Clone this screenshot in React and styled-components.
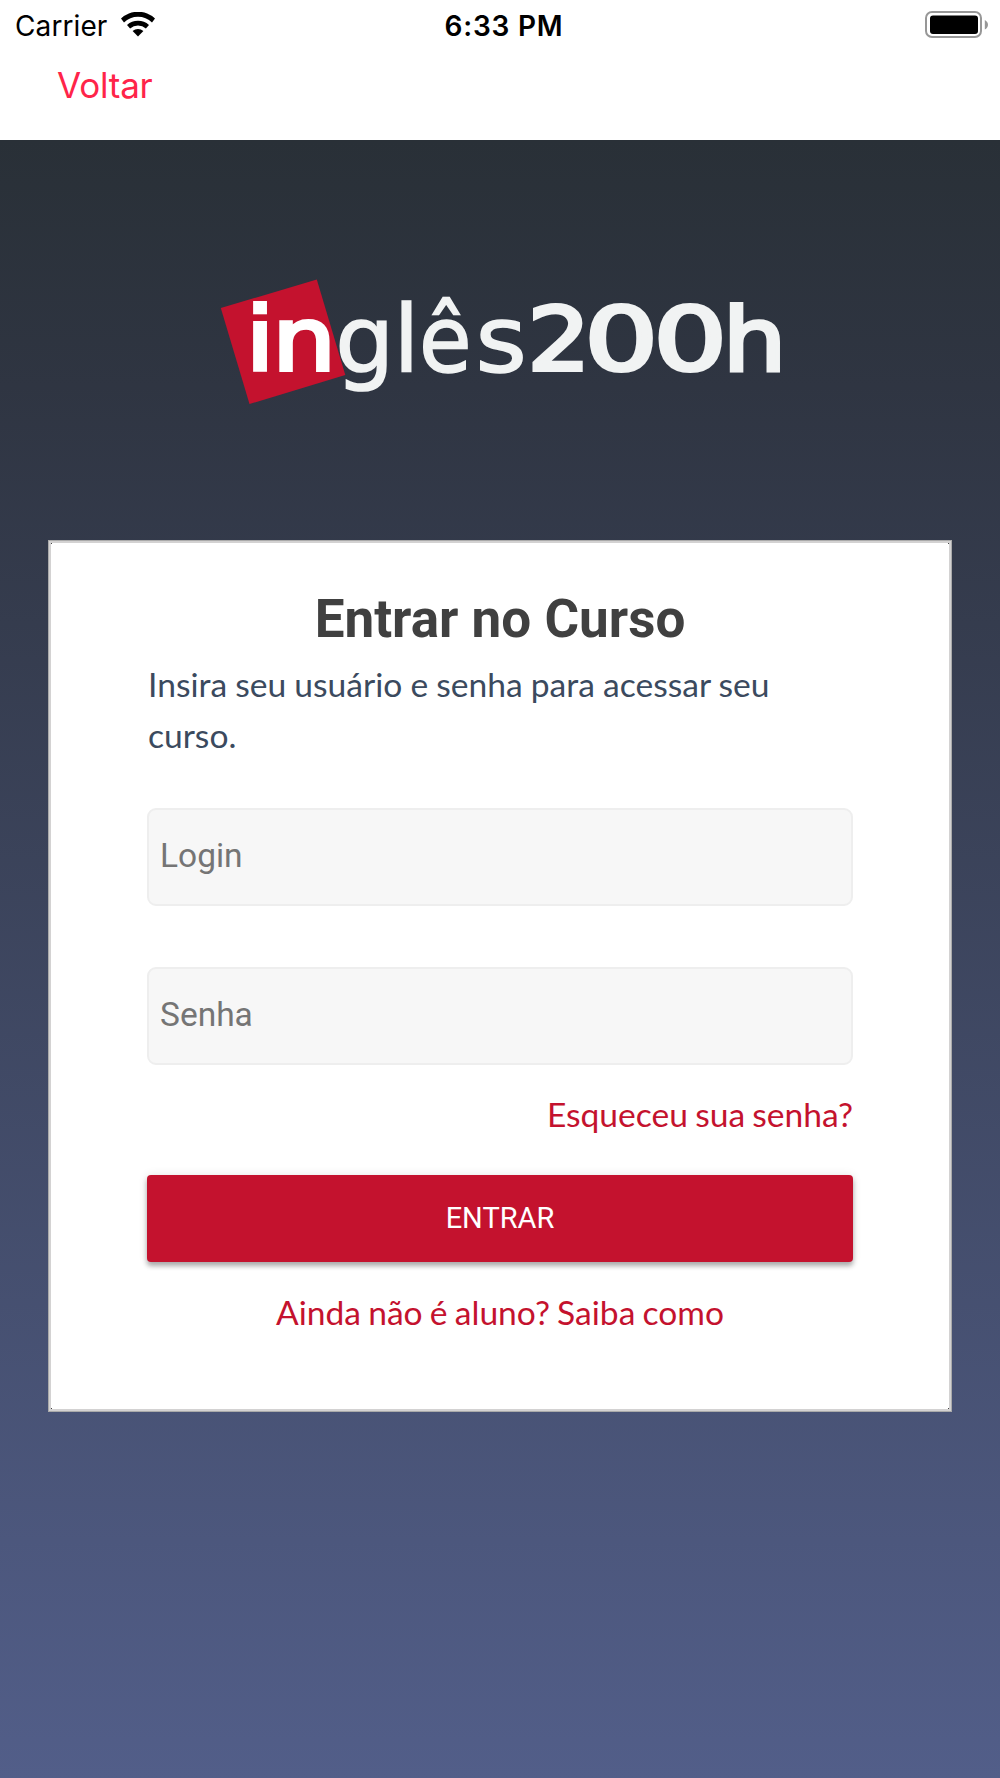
import React from 'react';
import styled, {createGlobalStyle} from 'styled-components';


const GlobalStyle = createGlobalStyle`
  * {
    box-sizing: border-box;
  }

  body {
    margin: 0;
    background: #525e89;
  }
`;


// widths of the logo letters are tuned one by one
const Logo = () => (
    <LogoSvg viewBox="0 0 580 140" role="img" aria-label="inglês200h">
        <polygon points="10.8,38 106.8,9.5 135.3,105 39.5,134"/>
        <BoldText transform="translate(36.6 102.3) scale(0.85 1)">i</BoldText>
        <MediumText $color="#ffffff" transform="translate(62.4 100.4) scale(1.14 1)">n</MediumText>
        <LightText transform="translate(125.3 101.6)">g</LightText>
        <LightText transform="translate(183.4 101.6)">l</LightText>
        <LightText transform="translate(209 101.6) scale(0.92 1)">ê</LightText>
        <LightText transform="translate(265.4 101.6) scale(1.06 1)">s</LightText>
        <MediumText transform="translate(317.4 100.4) scale(1.13 1)">2</MediumText>
        <MediumText transform="translate(374.5 100.4) scale(1.32 1)">0</MediumText>
        <MediumText transform="translate(443.5 100.4) scale(1.32 1)">0</MediumText>
        <MediumText transform="translate(513 100.4) scale(1.14 1)">h</MediumText>
    </LogoSvg>
);

const Wifi = () => (
    <WifiSvg viewBox="0 0 34 25">
        <path d="M0 6.4A25 25 0 0 1 34 6.4L31 10.4A20.5 20.5 0 0 0 3 10.4Z"/>
        <path d="M6 13A16.5 16.5 0 0 1 28 13L24.9 16.4A12 12 0 0 0 9.1 16.4Z"/>
        <path d="M11.6 19A8.5 8.5 0 0 1 22.4 19L17 24.5Z"/>
    </WifiSvg>
);

const Battery = () => (
    <BatterySvg viewBox="0 0 64 28">
        <rect x="1" y="1" width="55" height="25" rx="6" fill="none" stroke="#979797" strokeWidth="2"/>
        <rect x="5" y="4.6" width="48" height="18.4" rx="3"/>
        <path d="M59.8 9C61.8 10 63 11.7 63 13.8C63 16 61.8 17.6 59.8 18.6Z" fill="#979797"/>
    </BatterySvg>
);


export default class App extends React.Component {

    constructor(props) {
        super(props);

        this.state = {
            login: '',
            senha: '',
        };

        this.fieldChange = this.fieldChange.bind(this);
    }


    fieldChange(event) {
        this.setState({[event.target.name]: event.target.value});
    }


    render() {
        return (
            <Screen>
                <GlobalStyle/>
                <Header>
                    <StatusBar>
                        <Carrier>
                            <span>Carrier</span>
                            <Wifi/>
                        </Carrier>
                        <Time>6:33 PM</Time>
                        <Battery/>
                    </StatusBar>
                    <Back>Voltar</Back>
                </Header>
                <Content>
                    <Logo/>
                    <Card onSubmit={event => event.preventDefault()}>
                        <Title>Entrar no Curso</Title>
                        <Description>Insira seu usuário e senha para acessar seu curso.</Description>
                        <Field
                            name={'login'}
                            placeholder={'Login'}
                            value={this.state.login}
                            onChange={this.fieldChange}/>
                        <Field
                            name={'senha'}
                            type={'password'}
                            placeholder={'Senha'}
                            value={this.state.senha}
                            onChange={this.fieldChange}/>
                        <TextLink $align="flex-end">Esqueceu sua senha?</TextLink>
                        <Submit>ENTRAR</Submit>
                        <TextLink $align="center">Ainda não é aluno? Saiba como</TextLink>
                    </Card>
                </Content>
            </Screen>
        );
    }

}


const Screen = styled.div`
  width: 1000px;
  height: 1778px;
  display: flex;
  flex-direction: column;
  overflow: hidden;
`;


const Header = styled.header`
  height: 140px;
  flex: none;
  background: #ffffff;
  color: #000000;
  font-family: Inter, "Liberation Sans", sans-serif;
`;

const StatusBar = styled.div`
  height: 51px;
  padding: 0 11px 0 15px;
  display: grid;
  grid-template-columns: 1fr auto 1fr;
  align-items: center;
`;

const Carrier = styled.div`
  display: flex;
  align-items: center;
  gap: 14px;
  font-size: 28px;
  letter-spacing: 0.1px;
`;

const WifiSvg = styled.svg`
  width: 34px;
  height: 25px;
  margin-bottom: 2px;
`;

const Time = styled.div`
  padding-left: 4px;
  font-size: 28px;
  font-weight: 600;
  letter-spacing: 0.8px;
`;

const BatterySvg = styled.svg`
  width: 64px;
  height: 28px;
  margin-bottom: 1px;
  justify-self: end;
`;

const Back = styled.a`
  display: block;
  padding-left: 57px;
  font-size: 35px;
  line-height: 68px;
  letter-spacing: -0.2px;
  color: #ff2449;
`;


const Content = styled.main`
  flex: 1;
  display: flex;
  flex-direction: column;
  align-items: center;
  padding-top: 130px;
  background: linear-gradient(180deg, #293037 0%, #2f3542 15%, #525e89 100%);
`;

const LogoSvg = styled.svg`
  width: 580px;
  height: 140px;
  flex: none;
  overflow: visible;
  fill: #c4122e;
`;

const LogoText = styled.text`
  font-family: "DejaVu Sans", sans-serif;
  font-size: 93px;
`;

const LightText = styled(LogoText)`
  fill: #f1f3f3;
  stroke: #f1f3f3;
  stroke-width: 1.6px;
`;

const MediumText = styled(LogoText)`
  font-size: 87.5px;
  fill: ${props => props.$color || '#f1f3f3'};
  stroke: ${props => props.$color || '#f1f3f3'};
  stroke-width: 3.9px;
`;

const BoldText = styled(LogoText)`
  font-weight: 700;
  fill: #ffffff;
`;


const Card = styled.form`
  width: 904px;
  height: 872px;
  margin-top: 130px;
  padding: 45px 98px 0;
  display: flex;
  flex-direction: column;
  background:
    linear-gradient(#444444, #444444) 2px 2px / 1px 1px no-repeat,
    linear-gradient(#444444, #444444) calc(100% - 2px) 2px / 1px 1px no-repeat,
    linear-gradient(#444444, #444444) 2px calc(100% - 2px) / 1px 1px no-repeat,
    linear-gradient(#444444, #444444) calc(100% - 2px) calc(100% - 2px) / 1px 1px no-repeat,
    #ffffff;
  border: 1px solid #aaaaaa;
  box-shadow: inset 0 0 0 2px #d3d2d2;
`;

const Title = styled.h1`
  margin: 0;
  font-family: Roboto, sans-serif;
  font-size: 53px;
  font-weight: 700;
  line-height: 66px;
  text-align: center;
  color: #404040;
`;

const Description = styled.p`
  margin: 7px 0 47px;
  padding-left: 1px;
  font-family: Lato, sans-serif;
  font-size: 33.6px;
  line-height: 51px;
  word-spacing: -0.5px;
  color: #3b4a5e;
`;

const Field = styled.input`
  width: 100%;
  height: 98px;
  flex: none;
  margin: 0 0 61px;
  padding: 0 11px 4px;
  border: 2px solid #eeeeee;
  border-radius: 9px;
  background: #f7f7f7;
  font-family: Roboto, sans-serif;
  font-size: 33.5px;
  color: #404040;

  &:last-of-type {
    margin-bottom: 24px;
  }

  &::placeholder {
    color: #757575;
    opacity: 1;
  }
`;

const TextLink = styled.a`
  align-self: ${props => props.$align};
  font-family: Lato, sans-serif;
  font-size: 33.6px;
  line-height: 51px;
  word-spacing: -1.4px;
  color: #c4122e;
`;

const Submit = styled.button`
  height: 87px;
  flex: none;
  margin: 35px 0 25px;
  padding: 0 0 2px;
  border: 0;
  border-radius: 4px;
  background: #c4122e;
  box-shadow: 0 4px 5px rgba(0, 0, 0, 0.3), 0 0 10px rgba(0, 0, 0, 0.1);
  font-family: Roboto, sans-serif;
  font-size: 29px;
  color: #ffffff;
`;
